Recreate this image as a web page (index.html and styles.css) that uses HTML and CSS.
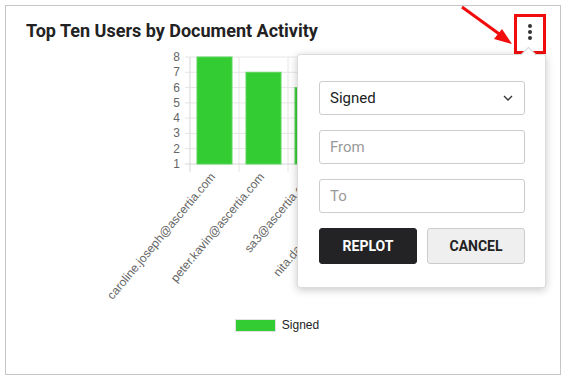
FILE: index.html
```html
<!DOCTYPE html>
<html lang="en">
<head>
    <meta charset="UTF-8">
    <meta name="viewport" content="width=device-width, initial-scale=1.0">
    <title>Top Ten Users by Document Activity</title>
    <link rel="stylesheet" href="styles.css">
</head>
<body>
    <div class="card">
        <div class="card-header">
            <h2 class="card-title">Top Ten Users by Document Activity</h2>
        </div>

        <svg class="chart" width="556" height="264" viewBox="0 0 556 264">
            <g class="grid">
                <line x1="179" y1="11" x2="540" y2="11"/>
                <line x1="179" y1="26.3" x2="540" y2="26.3"/>
                <line x1="179" y1="41.6" x2="540" y2="41.6"/>
                <line x1="179" y1="56.9" x2="540" y2="56.9"/>
                <line x1="179" y1="72.1" x2="540" y2="72.1"/>
                <line x1="179" y1="87.4" x2="540" y2="87.4"/>
                <line x1="179" y1="102.7" x2="540" y2="102.7"/>
                <line x1="233" y1="11" x2="233" y2="126"/>
                <line x1="282" y1="11" x2="282" y2="126"/>
                <line x1="331" y1="11" x2="331" y2="126"/>
                <line x1="380" y1="11" x2="380" y2="126"/>
            </g>
            <g class="axis">
                <line x1="184" y1="11" x2="184" y2="126"/>
                <line x1="179" y1="118" x2="540" y2="118"/>
            </g>
            <g class="y-labels">
                <text x="174" y="15">8</text>
                <text x="174" y="30.3">7</text>
                <text x="174" y="45.6">6</text>
                <text x="174" y="60.9">5</text>
                <text x="174" y="76.1">4</text>
                <text x="174" y="91.4">3</text>
                <text x="174" y="106.7">2</text>
                <text x="174" y="122">1</text>
            </g>
            <g class="bars">
                <rect x="191" y="11" width="35" height="107"/>
                <rect x="240" y="26.3" width="35" height="91.7"/>
                <rect x="289" y="41.6" width="35" height="76.4"/>
                <rect x="338" y="56.9" width="35" height="61.1"/>
            </g>
            <g class="x-labels">
                <text transform="translate(210 131) rotate(-50)">caroline.joseph@ascertia.com</text>
                <text transform="translate(259 131) rotate(-50)">peter.kavin@ascertia.com</text>
                <text transform="translate(308 131) rotate(-50)">sa3@ascertia.com</text>
                <text transform="translate(357 131) rotate(-50)">nita.davis@ascertia.com</text>
            </g>
        </svg>

        <div class="legend">
            <span class="legend-box"></span>
            <span class="legend-text">Signed</span>
        </div>

        <button class="menu-btn" type="button">
            <span class="dot"></span>
            <span class="dot"></span>
            <span class="dot"></span>
        </button>

        <div class="popover">
            <div class="select">
                <span>Signed</span>
                <svg width="10" height="6" viewBox="0 0 10 6"><path d="M1 1 L5 5 L9 1" fill="none" stroke="#333" stroke-width="1.3"/></svg>
            </div>
            <input class="field" type="text" placeholder="From">
            <input class="field" type="text" placeholder="To">
            <div class="actions">
                <button class="btn btn-dark" type="button">REPLOT</button>
                <button class="btn btn-light" type="button">CANCEL</button>
            </div>
        </div>
    </div>

    <svg class="pointer" width="60" height="45" viewBox="0 0 60 45">
        <line x1="2" y1="2" x2="42" y2="31" stroke="#f20d0d" stroke-width="3"/>
        <polygon points="52,39 34,34 42,24" fill="#f20d0d"/>
    </svg>
</body>
</html>
```

FILE: styles.css
```css
body {
    margin: 0;
    background: #ffffff;
    font-family: Roboto, "Liberation Sans", Arial, sans-serif;
}

.card {
    position: relative;
    width: 556px;
    height: 370px;
    margin: 5px;
    border: 1px solid #c6c6c6;
    box-sizing: border-box;
    background: #fff;
}

.card-header {
    padding: 14px 20px 5px;
}

.card-title {
    margin: 0;
    font-size: 18px;
    line-height: 21px;
    font-weight: 700;
    color: #222;
}

.chart {
    display: block;
}

.grid line {
    stroke: #e6e6e6;
    stroke-width: 1;
}

.axis line {
    stroke: #d6d6d6;
    stroke-width: 1;
}

.bars rect {
    fill: #33cc33;
    stroke: #5ad65a;
    stroke-width: 1;
}

.y-labels text {
    font-family: "Liberation Sans", Arial, sans-serif;
    font-size: 12px;
    fill: #666;
    text-anchor: end;
}

.x-labels text {
    font-family: "Liberation Sans", Arial, sans-serif;
    font-size: 12px;
    fill: #666;
    text-anchor: end;
}

.legend {
    display: flex;
    justify-content: center;
    align-items: center;
    gap: 6px;
    margin-top: 8px;
    padding-right: 12px;
}

.legend-box {
    width: 39px;
    height: 11px;
    background: #33cc33;
    border: 1px solid #e2e2e2;
}

.legend-text {
    font-family: "Liberation Sans", Arial, sans-serif;
    font-size: 12px;
    color: #222;
}

.menu-btn {
    position: absolute;
    top: 8px;
    right: 14px;
    width: 32px;
    height: 40px;
    padding: 0;
    border: 3px solid #f20d0d;
    background: #fff;
    display: flex;
    flex-direction: column;
    align-items: center;
    justify-content: flex-start;
    gap: 2px;
    padding-top: 7px;
    box-sizing: border-box;
}

.dot {
    width: 4px;
    height: 4px;
    border-radius: 50%;
    background: #333;
}

.popover {
    position: absolute;
    top: 48px;
    right: 14px;
    width: 249px;
    height: 234px;
    box-sizing: border-box;
    padding: 26px 20px 0 21px;
    background: #fff;
    border: 1px solid #dcdcdc;
    border-radius: 3px;
    box-shadow: 0 2px 8px rgba(0, 0, 0, 0.22);
    display: flex;
    flex-direction: column;
    gap: 15px;
}

.popover::before {
    content: "";
    position: absolute;
    top: -6px;
    right: 11px;
    width: 10px;
    height: 10px;
    background: #fff;
    border-left: 1px solid #d6d6d6;
    border-top: 1px solid #d6d6d6;
    transform: rotate(45deg);
}

.select,
.field {
    width: 100%;
    height: 34px;
    box-sizing: border-box;
    border: 1px solid #cccccc;
    border-radius: 3px;
    font-family: Roboto, "Liberation Sans", Arial, sans-serif;
    font-size: 15px;
    color: #222;
    background: #fff;
}

.select {
    display: flex;
    align-items: center;
    justify-content: space-between;
    padding: 0 11px 0 10px;
}

.field {
    padding: 0 10px;
    outline: none;
}

.field::placeholder {
    color: #9a9a9a;
}

.actions {
    display: flex;
    gap: 10px;
}

.btn {
    flex: 1;
    height: 36px;
    border-radius: 3px;
    font-family: Roboto, "Liberation Sans", Arial, sans-serif;
    font-size: 14px;
    font-weight: 700;
    cursor: pointer;
}

.btn-dark {
    background: #232325;
    color: #fff;
    border: 1px solid #232325;
}

.btn-light {
    background: #efefef;
    color: #222;
    border: 1px solid #cccccc;
}

.pointer {
    position: absolute;
    left: 460px;
    top: 5px;
}
```
